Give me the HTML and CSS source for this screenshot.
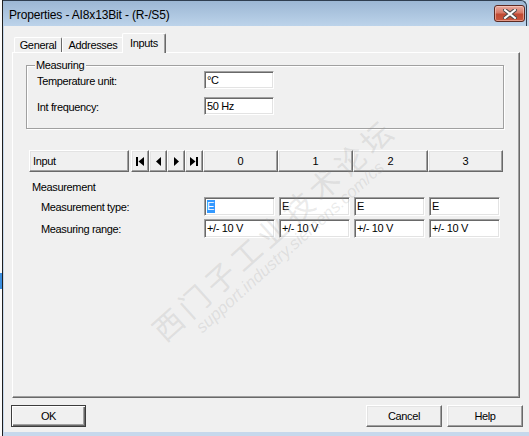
FILE: index.html
```html
<!DOCTYPE html>
<html>
<head>
<meta charset="utf-8">
<link rel="stylesheet" href="styles.css">
</head>
<body>
<div class="desktop">
  <div class="edge"><div class="edge-blue"></div></div>
  <div class="window">
    <div class="titlebar">
      <span class="title">Properties - AI8x13Bit - (R-/S5)</span>
      <div class="close">
        <svg width="14" height="10" viewBox="0 0 14 10"><path d="M2 1 L12 9 M12 1 L2 9" stroke="#4a4a4a" stroke-width="4" stroke-linecap="square"/><path d="M2 1 L12 9 M12 1 L2 9" stroke="#fff" stroke-width="2" stroke-linecap="square"/></svg>
      </div>
    </div>
    <div class="client">
      <div class="tabs">
        <div class="tab t-general">General</div>
        <div class="tab t-addr">Addresses</div>
        <div class="tab active">Inputs</div>
      </div>
      <div class="panel">
        <div class="group">
          <span class="legend">Measuring</span>
          <div class="form-grid">
            <span class="lbl">Temperature unit:</span><div class="field f70">°C</div>
            <span class="lbl">Int frequency:</span><div class="field f70">50 Hz</div>
          </div>
        </div>
        <div class="navrow">
          <div class="btn input-btn">Input</div>
          <div class="btn nav"><svg width="8" height="9" viewBox="0 0 8 9"><rect x="0" y="0" width="2" height="9"/><polygon points="8,0 8,9 2.5,4.5"/></svg></div>
          <div class="btn nav"><svg width="5" height="9" viewBox="0 0 5 9"><polygon points="5,0 5,9 0,4.5"/></svg></div>
          <div class="btn nav"><svg width="5" height="9" viewBox="0 0 5 9"><polygon points="0,0 0,9 5,4.5"/></svg></div>
          <div class="btn nav"><svg width="8" height="9" viewBox="0 0 8 9"><polygon points="0,0 0,9 5.5,4.5"/><rect x="6" y="0" width="2" height="9"/></svg></div>
          <div class="btn col">0</div>
          <div class="btn col">1</div>
          <div class="btn col">2</div>
          <div class="btn col">3</div>
        </div>
        <div class="section-title">Measurement</div>
        <div class="meas-grid">
          <span class="lbl">Measurement type:</span>
          <div class="field"><span class="sel">E</span></div>
          <div class="field">E</div>
          <div class="field">E</div>
          <div class="field">E</div>
          <span class="lbl">Measuring range:</span>
          <div class="field">+/- 10 V</div>
          <div class="field">+/- 10 V</div>
          <div class="field">+/- 10 V</div>
          <div class="field">+/- 10 V</div>
        </div>
        <div class="watermark">
          <div class="wm-cn">西门子工业技术论坛</div>
          <div class="wm-url">support.industry.siemens.com/cs</div>
        </div>
      </div>
      <div class="footer">
        <div class="btn fbtn default">OK</div>
        <div class="fright">
          <div class="btn fbtn">Cancel</div>
          <div class="btn fbtn">Help</div>
        </div>
      </div>
    </div>
  </div>
</div>
</body>
</html>
```

FILE: styles.css
```css
* { box-sizing: border-box; }

body {
  margin: 0;
  width: 529px;
  height: 436px;
  overflow: hidden;
  background: #ffffff;
  font-family: "Liberation Sans", Arial, sans-serif;
  font-size: 11px;
  letter-spacing: -0.35px;
  color: #000;
}

.desktop {
  display: flex;
  height: 436px;
}

.edge {
  width: 2px;
  flex: none;
  background: #fafafa;
  padding-top: 273px;
}

.edge-blue {
  height: 16px;
  background: #3b8fe0;
}

.window {
  width: 527px;
  flex: none;
  height: 436px;
  border-left: 1px solid #1e1e1e;
  background: #c6d8ec;
  display: flex;
  flex-direction: column;
}

.titlebar {
  height: 26px;
  flex: none;
  display: flex;
  align-items: flex-start;
  justify-content: space-between;
  background: linear-gradient(#9cb7d4, #bcd3ea);
  border-top: 1px solid #2f3e50;
  border-right: 1px solid #2f3e50;
  border-top-right-radius: 6px;
  margin-right: 2px;
  padding: 0 1px 0 6px;
}

.title {
  font-family: "Liberation Sans", Arial, sans-serif;
  font-size: 12px;
  letter-spacing: -0.15px;
  line-height: 14px;
  margin-top: 7px;
  color: #000;
}

.close {
  width: 31px;
  height: 17px;
  margin-top: 4px;
  border: 1px solid #5c2a22;
  border-radius: 3px;
  background: linear-gradient(#e8aba0 0%, #d77a68 45%, #c04a33 55%, #c8573f 100%);
  box-shadow: inset 0 0 0 1px rgba(255, 220, 210, 0.5);
  display: flex;
  align-items: center;
  justify-content: center;
}

.client {
  flex: 1;
  margin: 0 0 4px 1px;
  background: #f0f0f0;
  padding: 7px 7px 0 8px;
  display: flex;
  flex-direction: column;
}

/* Tabs */
.tabs {
  display: flex;
  align-items: flex-end;
  height: 20px;
  margin-bottom: -1px;
  padding-left: 2px;
  position: relative;
  z-index: 1;
}

.tab {
  height: 15px;
  padding-top: 1px;
  line-height: 13px;
  border-top: 1px solid #fff;
  border-left: 1px solid #fff;
  border-right: 1px solid #696969;
  border-top-left-radius: 2px;
  border-top-right-radius: 2px;
  background: #f0f0f0;
  text-align: center;
  margin-bottom: 1px;
}

.t-general { width: 48px; }
.t-addr { width: 62px; }

.tab.active {
  width: 44px;
  height: 20px;
  padding-top: 3px;
  margin-left: -2px;
  margin-bottom: 0;
  position: relative;
  z-index: 2;
  box-shadow: inset -1px 0 #a0a0a0;
}

/* Panel */
.panel {
  position: relative;
  width: 508px;
  height: 346px;
  flex: none;
  border-top: 1px solid #fff;
  border-left: 1px solid #fff;
  border-right: 1px solid #696969;
  border-bottom: 1px solid #696969;
  box-shadow: inset -1px -1px #a0a0a0;
  padding: 12px 0 0 13px;
  overflow: hidden;
}

.group {
  position: relative;
  width: 478px;
  border: 1px solid #a0a0a0;
  box-shadow: inset 1px 1px #fff, 1px 1px #fff;
  padding: 5px 0 13px 10px;
}

.legend {
  position: absolute;
  left: 8px;
  top: -7px;
  line-height: 13px;
  padding: 0 2px 0 1px;
  background: #f0f0f0;
}

.form-grid {
  display: grid;
  grid-template-columns: 167px 70px;
  row-gap: 8px;
}

.lbl {
  line-height: 13px;
  padding-top: 4px;
}

.field {
  height: 19px;
  background: #fff;
  border: 1px solid;
  border-color: #a0a0a0 #fff #fff #a0a0a0;
  box-shadow: inset 1px 1px #696969, inset -1px -1px #e3e3e3;
  padding: 2px 0 0 2px;
  line-height: 13px;
  white-space: nowrap;
  overflow: hidden;
}

.f70 { height: 18px; padding-top: 2px; }

.sel {
  background: #3399ff;
  color: #fff;
  display: inline-block;
  line-height: 13px;
  padding: 0 1px 0 0;
}

/* Nav row */
.navrow {
  display: flex;
  margin: 21px 0 0 3px;
  height: 22px;
}

.btn {
  background: #f0f0f0;
  border: 1px solid;
  border-color: #fff #696969 #696969 #fff;
  box-shadow: inset -1px -1px #a0a0a0, inset 1px 1px #e3e3e3;
  line-height: 13px;
  display: flex;
  align-items: center;
}

.input-btn {
  width: 100px;
  padding-left: 3px;
  margin-right: 2px;
  padding-top: 1px;
}

.nav {
  width: 18px;
  justify-content: center;
}

.nav svg { fill: #000; display: block; }

.col {
  width: 75px;
  justify-content: center;
  padding-top: 1px;
}

.section-title {
  margin: 9px 0 0 6px;
  line-height: 13px;
}

.meas-grid {
  display: grid;
  grid-template-columns: 159px 71px 71px 71px 71px;
  column-gap: 4px;
  row-gap: 3px;
  margin: 3px 0 0 15px;
}

.meas-grid .lbl {
  padding-top: 4px;
}

/* Watermark */
.watermark {
  position: absolute;
  left: 76px;
  top: 156px;
  width: 380px;
  text-align: center;
  transform: rotate(-42deg);
  pointer-events: none;
  color: rgba(150, 150, 150, 0.2);
  letter-spacing: 0;
}

.wm-cn {
  font-family: "Noto Sans CJK SC", sans-serif;
  font-size: 30px;
  line-height: 34px;
  letter-spacing: 5px;
}

.wm-url {
  font-family: "Liberation Sans", Arial, sans-serif;
  font-size: 17px;
  font-style: italic;
  line-height: 18px;
  margin-top: 0;
}

/* Footer */
.footer {
  display: flex;
  justify-content: space-between;
  margin: 7px -1px 0 -1px;
}

.fbtn {
  width: 75px;
  height: 22px;
  justify-content: center;
  padding-top: 1px;
}

.fright {
  display: flex;
  gap: 5px;
}

.fright .fbtn { width: 76px; }

.default {
  border: 1px solid #3c3c3c;
  box-shadow: inset 1px 1px #fff, inset -1px -1px #696969, inset -2px -2px #a0a0a0;
}
```
